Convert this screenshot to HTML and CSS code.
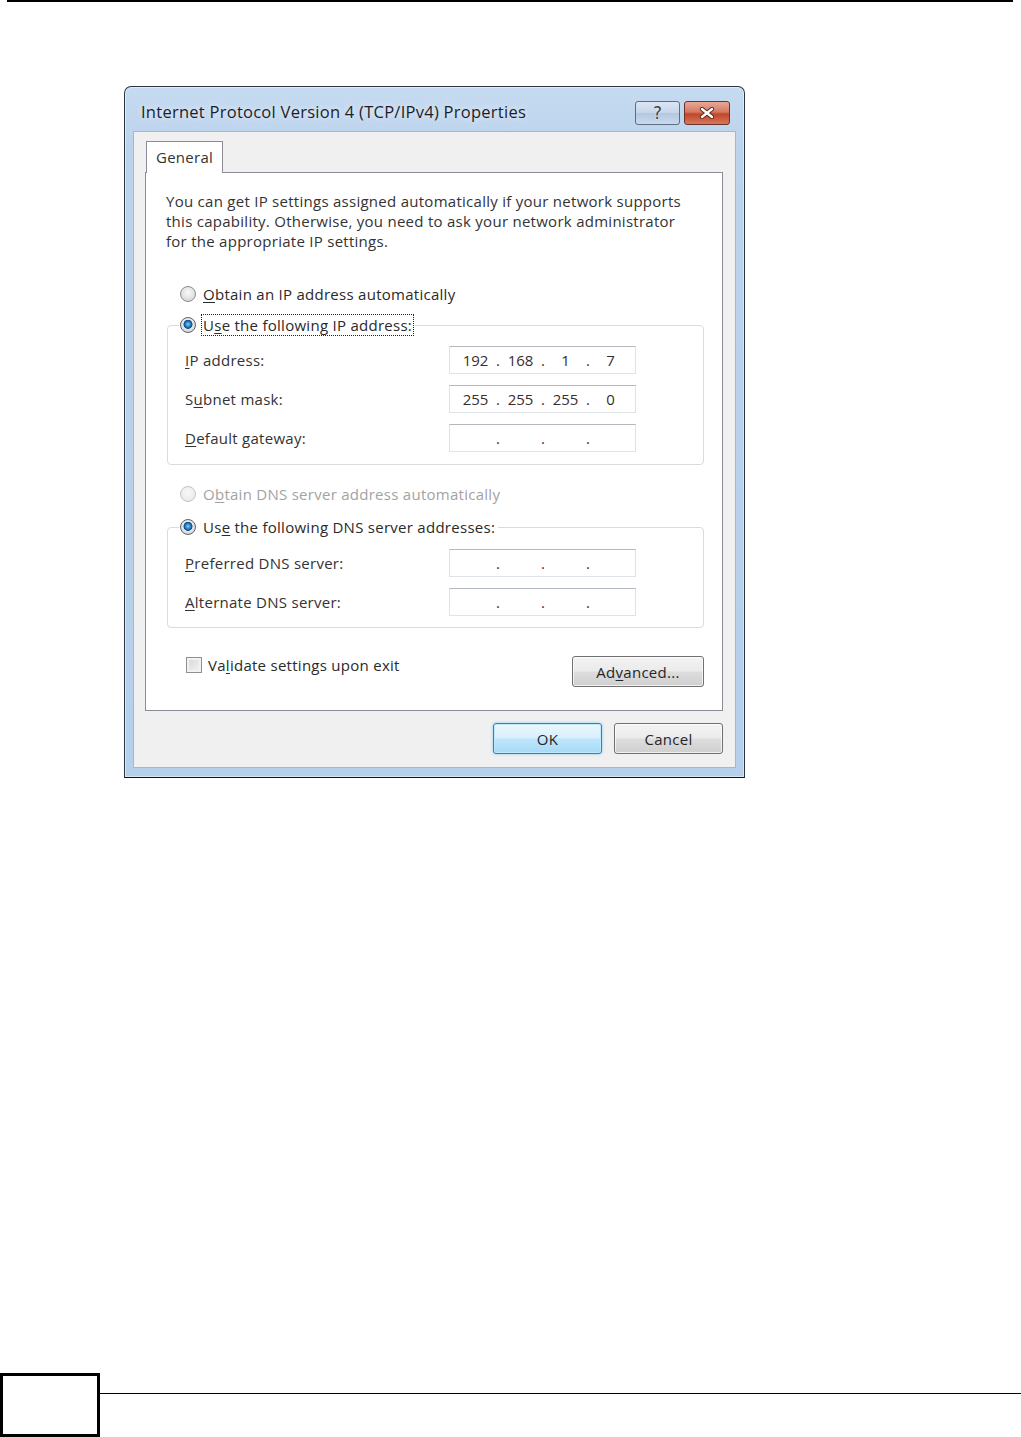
FILE: index.html
```html
<!DOCTYPE html>
<html lang="en">
<head>
  <meta charset="UTF-8" />
  <title>Internet Protocol Version 4 (TCP/IPv4) Properties</title>
  <link rel="stylesheet" href="styles.css">
</head>
<body>
  <div class="page-rule"></div>

  <main class="figure">
    <div class="window">
      <div class="titlebar">
        <span class="title">Internet Protocol Version 4 (TCP/IPv4) Properties</span>
        <div class="caption-btns">
          <span class="cap-btn cap-help">?</span>
          <span class="cap-btn cap-close">
            <svg width="16" height="12" viewBox="0 0 16 12">
              <path d="M3 2 L13 10 M13 2 L3 10" stroke="#5a2418" stroke-width="4.2" stroke-linecap="round" fill="none"/>
              <path d="M3 2 L13 10 M13 2 L3 10" stroke="#fff" stroke-width="2.4" stroke-linecap="round" fill="none"/>
            </svg>
          </span>
        </div>
      </div>

      <div class="client">
        <div class="tabs">
          <span class="tab">General</span>
        </div>

        <div class="tab-panel">
          <p class="intro">You can get IP settings assigned automatically if your network supports<br>this capability. Otherwise, you need to ask your network administrator<br>for the appropriate IP settings.</p>

          <div class="radio-line first">
            <span class="radio"></span>
            <span><u>O</u>btain an IP address automatically</span>
          </div>

          <fieldset class="group">
            <legend>
              <span class="radio checked"></span>
              <span class="focus">U<u>s</u>e the following IP address:</span>
            </legend>
            <div class="rows">
              <span class="field-label"><u>I</u>P address:</span>
              <div class="ip-box"><span>192</span><i>.</i><span>168</span><i>.</i><span>1</span><i>.</i><span>7</span></div>
              <span class="field-label">S<u>u</u>bnet mask:</span>
              <div class="ip-box"><span>255</span><i>.</i><span>255</span><i>.</i><span>255</span><i>.</i><span>0</span></div>
              <span class="field-label"><u>D</u>efault gateway:</span>
              <div class="ip-box"><span></span><i>.</i><span></span><i>.</i><span></span><i>.</i><span></span></div>
            </div>
          </fieldset>

          <div class="radio-line disabled">
            <span class="radio"></span>
            <span>O<u>b</u>tain DNS server address automatically</span>
          </div>

          <fieldset class="group dns">
            <legend>
              <span class="radio checked"></span>
              <span>Us<u>e</u> the following DNS server addresses:</span>
            </legend>
            <div class="rows">
              <span class="field-label"><u>P</u>referred DNS server:</span>
              <div class="ip-box"><span></span><i>.</i><span></span><i>.</i><span></span><i>.</i><span></span></div>
              <span class="field-label"><u>A</u>lternate DNS server:</span>
              <div class="ip-box"><span></span><i>.</i><span></span><i>.</i><span></span><i>.</i><span></span></div>
            </div>
          </fieldset>

          <div class="panel-foot">
            <div class="check-line">
              <span class="checkbox"></span>
              <span>Va<u>l</u>idate settings upon exit</span>
            </div>
            <button class="btn">Ad<u>v</u>anced...</button>
          </div>
        </div>

        <div class="dialog-btns">
          <button class="btn btn-default">OK</button>
          <button class="btn">Cancel</button>
        </div>
      </div>
    </div>
  </main>

  <footer class="page-foot">
    <div class="page-num"></div>
    <div class="foot-rule"></div>
  </footer>
</body>
</html>
```

FILE: styles.css
```css
* { margin: 0; padding: 0; box-sizing: border-box; }
html, body { background: #fff; }
body {
  min-height: 1437px;
  display: flex;
  flex-direction: column;
  font-family: 'Open Sans', 'Noto Sans', sans-serif;
  font-size: 15px;
  letter-spacing: 0.27px;
  color: #2a2a2a;
}
u { text-decoration: underline; text-underline-offset: 2px; }

.page-rule { height: 2px; margin: 0 8px 0 7px; background: #000; }

.figure { margin: 84px 0 0 124px; }

/* window frame */
.window {
  width: 621px;
  height: 692px;
  border: 1px solid #2c3440;
  border-bottom-color: #111;
  border-radius: 7px 7px 0 0;
  background: linear-gradient(to bottom, #c6dbf1 0, #bcd3ec 60px, #b6cfea 100%);
  box-shadow: inset 0 0 0 1px rgba(255,255,255,0.45);
  display: flex;
  flex-direction: column;
  padding: 0 8px 9px 8px;
}
.titlebar {
  height: 44px;
  display: flex;
  align-items: flex-start;
  justify-content: space-between;
}
.title {
  margin: 15px 0 0 8px;
  font-size: 16.5px;
  letter-spacing: 0.26px;
  color: #1d1d2a;
  line-height: 20px;
  text-shadow: 0 0 6px rgba(255,255,255,0.9);
}
.caption-btns { display: flex; gap: 4px; margin-top: 14px; margin-right: 6px; }
.cap-btn {
  width: 45px; height: 24px;
  border: 1px solid #5c6d86;
  border-radius: 3px;
  display: flex; align-items: center; justify-content: center;
}
.cap-help {
  background: linear-gradient(to bottom, #dbe6f3 0, #c6d6ea 48%, #b3c7e0 52%, #c9daee 100%);
  color: #3b4250;
  font-size: 17px;
  letter-spacing: 0;
  font-family: 'DejaVu Sans', sans-serif;
  text-shadow: 0 0 2px #fff;
}
.cap-close {
  width: 46px;
  border-color: #6e3328;
  background: linear-gradient(to bottom, #e8a897 0, #d67a63 45%, #c2462c 55%, #d5785e 100%);
}

/* client area */
.client {
  flex: 1;
  background: #f0f0f0;
  border: 1px solid #a3b7cf;
  padding: 9px 12px 0 11px;
  display: flex;
  flex-direction: column;
}
.tabs { display: flex; padding-left: 1px; }
.tab {
  width: 77px; height: 32px;
  border: 1px solid #898c95;
  border-bottom: none;
  background: #fff;
  padding: 5px 0 0 9px;
  margin-bottom: -1px;
  position: relative;
  z-index: 1;
  color: #333;
}
.tab-panel {
  height: 539px;
  background: #fff;
  border: 1px solid #898c95;
  padding: 0 18px 0 21px;
  display: flex;
  flex-direction: column;
}
.intro { margin: 18px 0 0 -1px; line-height: 20px; color: #333; white-space: nowrap; }

.radio-line { display: flex; align-items: center; gap: 7px; height: 20px; padding-left: 13px; }
.radio-line.first { margin-top: 33px; }
.radio-line.disabled { margin-top: 19px; color: #a3a3a3; }
.radio {
  width: 16px; height: 16px;
  border-radius: 50%;
  border: 1px solid #8d8d8d;
  background: radial-gradient(circle at 50% 40%, #fafafa 0, #e2e2e2 55%, #cfcfcf 100%);
  flex: none;
}
.disabled .radio { border-color: #c4c4c4; background: radial-gradient(circle at 50% 40%, #f8f8f8, #e6e6e6); }
.radio.checked {
  background:
    radial-gradient(circle at 50% 45%, #7ed0f5 0, #2a7fc2 2.6px, #0d4a88 4.2px, transparent 4.8px),
    radial-gradient(circle at 50% 40%, #fafafa 0, #e0e0e0 60%, #c9c9c9 100%);
  border-color: #5a6470;
}

/* group boxes */
.group {
  margin-top: 11px;
  border: 1px solid #d9dcdf;
  border-radius: 4px;
  padding: 0 0 12px 0;
  min-width: 0;
}
.group.dns { margin-top: 13px; padding-bottom: 11px; }
.group legend {
  margin-left: 11px;
  padding: 0 3px 0 1px;
  height: 20px;
  display: flex;
  align-items: center;
  gap: 7px;
}
.focus { outline: 1px dotted #222; outline-offset: 1px; line-height: 18px; }
.rows {
  display: grid;
  grid-template-columns: 264px 187px;
  row-gap: 11px;
  align-items: center;
  padding: 11px 0 0 17px;
}
.group.dns .rows { padding-top: 12px; }
.field-label { color: #333; }
.ip-box {
  height: 28px;
  border: 1px solid #dfe3e8;
  border-top-color: #b4b8be;
  background: #fff;
  display: flex;
  align-items: center;
  padding-left: 7px;
  color: #3a2d2d;
  letter-spacing: 0;
}
.ip-box span { width: 37px; text-align: center; }
.ip-box i { width: 8px; font-style: normal; text-align: center; }

/* bottom of tab panel */
.panel-foot {
  margin-top: 28px;
  display: flex;
  justify-content: space-between;
  align-items: flex-start;
}
.check-line { display: flex; align-items: center; gap: 6px; padding-left: 19px; height: 18px; }
.checkbox {
  width: 16px; height: 16px;
  border: 1px solid #8f8f8f;
  background: linear-gradient(135deg, #d6d6d6, #f4f4f4);
  box-shadow: inset 0 0 0 2px #f2f2f2;
}
.btn {
  width: 132px; height: 31px;
  border: 1px solid #707070;
  border-radius: 3px;
  background: linear-gradient(to bottom, #f3f3f3 0, #ebebeb 48%, #dddddd 52%, #cfcfcf 100%);
  box-shadow: inset 0 0 0 1px rgba(255,255,255,0.7);
  font: inherit;
  letter-spacing: inherit;
  color: #262626;
}

.dialog-btns {
  display: flex;
  justify-content: flex-end;
  gap: 12px;
  margin-top: 12px;
}
.dialog-btns .btn { width: 109px; }
.btn-default {
  border-color: #3c7fb1;
  background: linear-gradient(to bottom, #eaf6fd 0, #d9f0fc 48%, #bee6fd 52%, #a7d9f5 100%);
  box-shadow: inset 0 0 0 1px #c1e7fb, 0 0 3px #7cc6ee;
}

/* page footer */
.page-foot { margin-top: auto; display: flex; align-items: flex-start; }
.page-num { width: 100px; height: 64px; border: 3px solid #000; flex: none; }
.foot-rule { flex: 1; height: 1px; margin-top: 20px; background: #000; }
```
